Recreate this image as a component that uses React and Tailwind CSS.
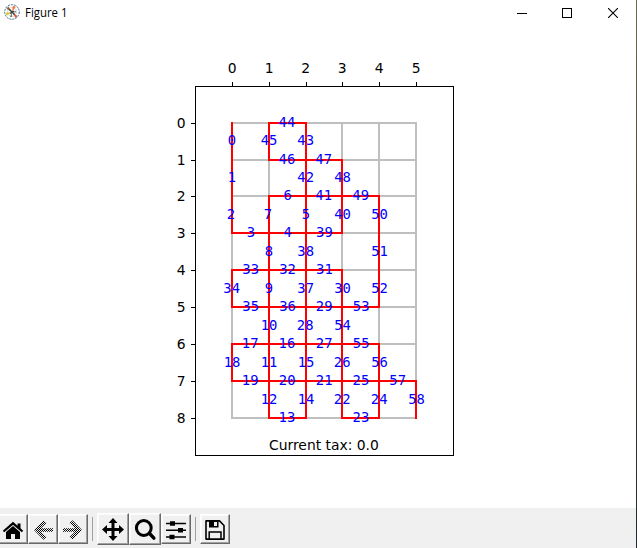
import React from "react";

const XS = [232, 269, 306, 342, 379, 416];
const YS = [123, 160, 196, 233, 270, 307, 344, 381, 418];

// [label, column, row, horizontal nudge]
const VERTICAL = [
  [0, 0, 0], [1, 0, 1], [2, 0, 2, -1], [45, 1, 0], [43, 2, 0, -0.3], [42, 2, 1, -0.3], [48, 3, 1, 0.6],
  [7, 1, 2, -1], [5, 2, 2], [40, 3, 2, 0.6], [50, 4, 2, 0.6], [8, 1, 3], [38, 2, 3, -0.3],
  [51, 4, 3, 0.6], [34, 0, 4, -0.3], [9, 1, 4], [37, 2, 4, -0.3], [30, 3, 4, 0.6], [52, 4, 4, 0.6],
  [10, 1, 5], [28, 2, 5, -0.8], [54, 3, 5, 0.6], [18, 0, 6], [11, 1, 6], [15, 2, 6],
  [26, 3, 6, 0.2], [56, 4, 6, 0.6], [12, 1, 7], [14, 2, 7], [22, 3, 7, 0.2],
  [24, 4, 7, 0.2], [58, 5, 7, 0.6],
];
const HORIZONTAL = [
  [44, 1, 0, -0.3], [46, 1, 1, -0.3], [47, 2, 1], [6, 1, 2, 0.6], [41, 2, 2], [49, 3, 2, 0.5],
  [3, 0, 3, 0.8], [4, 1, 3, 0.6], [39, 2, 3, 0.7], [33, 0, 4, 0.5], [32, 1, 4, 0.4],
  [31, 2, 4, 0.7], [35, 0, 5, 0.5], [36, 1, 5, 0.4], [29, 2, 5, 0.5], [53, 3, 5, 1],
  [17, 0, 6], [16, 1, 6, -0.3], [27, 2, 6, 0.5], [55, 3, 6, 1], [19, 0, 7], [20, 1, 7],
  [21, 2, 7, 0.5], [25, 3, 7, 0.7], [57, 4, 7, 0.5], [13, 1, 8, -0.3], [23, 3, 8, 0.7],
];

function Plot() {
  return (
    <svg
      width="636"
      height="483"
      viewBox="0 25 636 483"
      className="block font-['DejaVu_Sans',sans-serif] text-[13.89px]"
    >
      <g stroke="#bfbfbf" strokeWidth="2" strokeLinecap="square" shapeRendering="crispEdges">
        {XS.map((x) => <line key={x} x1={x} x2={x} y1="123" y2="418" />)}
        {YS.map((y) => <line key={y} x1="232" x2="416" y1={y} y2={y} />)}
      </g>
      <g stroke="#ff0000" strokeWidth="2" strokeLinecap="square" shapeRendering="crispEdges">
        {VERTICAL.map(([n, c, r]) => (
          <line key={n} x1={XS[c]} x2={XS[c]} y1={YS[r]} y2={YS[r + 1]} />
        ))}
        {HORIZONTAL.map(([n, c, r]) => (
          <line key={n} x1={XS[c]} x2={XS[c + 1]} y1={YS[r]} y2={YS[r]} />
        ))}
      </g>
      <g stroke="#000" fill="none" shapeRendering="crispEdges">
        <rect x="195.5" y="86.5" width="258" height="369" />
        {XS.map((x) => <line key={x} x1={x + 0.5} x2={x + 0.5} y1="82" y2="86" />)}
        {YS.map((y) => <line key={y} x1="191" x2="195" y1={y + 0.5} y2={y + 0.5} />)}
      </g>
      <g fill="#000">
        {XS.map((x, i) => <text key={x} x={x + (i === 2 ? -0.4 : 0.1)} y="73" textAnchor="middle">{i}</text>)}
        {YS.map((y, i) => <text key={y} x="185.5" y={y + 5} textAnchor="end">{i}</text>)}
        <text x="269" y="450">Current tax: 0.0</text>
      </g>
      <g fill="#0000ff" textAnchor="middle" className="font-['DejaVu_Sans_Mono',monospace]">
        {VERTICAL.map(([n, c, r, dx = 0]) => (
          <text key={n} x={XS[c] + dx} y={YS[r] + (r < 2 ? 22 : 23)}>{n}</text>
        ))}
        {HORIZONTAL.map(([n, c, r, dx = 0]) => (
          <text key={n} x={(XS[c] + XS[c + 1]) / 2 + dx - 0.3} y={YS[r] + 4}>{n}</text>
        ))}
      </g>
    </svg>
  );
}

function ToolButton({ large, label, children }) {
  const size = large ? "w-8 h-8" : "w-[30px] h-[30px]";
  return (
    <button
      aria-label={label}
      className={`${size} shrink-0 border border-t-white border-l-white border-r-[#696969] border-b-[#696969] bg-[#f0f0f0] shadow-[inset_-1px_-1px_0_#a0a0a0,inset_1px_1px_0_#fafafa]`}
    >
      <svg
        className="-ml-px -mt-px block overflow-visible"
        width={large ? 32 : 30}
        height={large ? 32 : 30}
      >
        {children}
      </svg>
    </button>
  );
}

function Separator() {
  return <div className="mx-1 h-6 w-px shrink-0 bg-[#a0a0a0]" />;
}

function Toolbar() {
  return (
    <div className="flex h-10 w-[636px] items-center overflow-hidden bg-[#f0f0f0] pt-0.5">
      <div className="-ml-0.5 flex items-center">
        <ToolButton label="Home">
          <path d="M8 18 15 12 22 18V25H17V20H13V25H8Z" />
          <path d="M5.5 17.5 15 9.3 24.5 17.5" fill="none" stroke="#000" strokeWidth="2.2" />
          <path d="M19.5 9.5h3v6l-3-2.5z" />
        </ToolButton>
        <ToolButton label="Back">
          <defs>
            <pattern id="dither" width="2" height="2" patternUnits="userSpaceOnUse">
              <path d="M0 0h1v1H0zM1 1h1v1H1z" shapeRendering="crispEdges" />
            </pattern>
          </defs>
          <path d="M6 16 15.5 6.2 18.5 9 13 14.2H25V17.8H13L18.5 23 15.5 25.8Z" fill="url(#dither)" />
        </ToolButton>
        <ToolButton label="Forward">
          <path d="M24 16 14.5 6.2 11.5 9 17 14.2H5V17.8H17L11.5 23 14.5 25.8Z" fill="url(#dither)" />
        </ToolButton>
      </div>
      <Separator />
      <ToolButton large label="Pan">
        <path d="M16 5 20.5 10H17.5V15H22V12L27 16.5 22 21V18H17.5V23H20.5L16 28 11.5 23H14.5V18H10V21L5 16.5 10 12V15H14.5V10H11.5Z" />
      </ToolButton>
      <ToolButton large label="Zoom">
        <circle cx="14.8" cy="15" r="7.4" fill="none" stroke="#000" strokeWidth="3" />
        <path d="m20.3 20.3 4.6 4.8" stroke="#000" strokeWidth="3.4" strokeLinecap="round" />
      </ToolButton>
      <ToolButton label="Configure subplots">
        <path d="M5 9.5h20M5 16.3h20M5 23h20" stroke="#000" strokeWidth="1.6" />
        <path d="M9 7.2h5v4.6H9zM17 14h5v4.6h-5zM8.5 20.7h5v4.6h-5z" />
      </ToolButton>
      <Separator />
      <ToolButton label="Save">
        <path d="M6 6.9H19.5L24 11.5V25.1H6Z" fill="none" stroke="#000" strokeWidth="1.6" strokeLinejoin="round" />
        <path d="M9 6.5H18.5V13.5H9ZM14 8V12H17V8Z" fillRule="evenodd" />
        <path d="M9.2 25V18H21V25" fill="none" stroke="#000" strokeWidth="1.5" />
      </ToolButton>
    </div>
  );
}

function TitleBar() {
  return (
    <div className="flex h-[25px] w-[636px] items-center bg-white">
      <svg className="-mt-px ml-1 block" width="16" height="16">
        <circle cx="8" cy="8" r="7.3" fill="#fff" stroke="#426b86" strokeWidth="1" strokeDasharray="2 1" />
        <circle cx="8" cy="8" r="4.5" fill="none" stroke="#bdc7ce" strokeWidth=".7" />
        <path d="m8 8 .8-6.2 3 1z" fill="#ef7940" />
        <path d="m8 8 5.4 4-1.8 2z" fill="#df5830" />
        <path d="M8 8 1.7 8.8l.8 3z" fill="#dcc53e" />
        <path d="M8 8 4.4 2.6 2.4 4.7z" fill="#8b6744" />
        <path d="m8 8-2 5h2zM8 8l4-1v1.5z" fill="#6a7c62" />
        <path d="m5.5 5.5 5 5M6 9.5l4-2.5" stroke="#343b42" strokeWidth="1.4" />
      </svg>
      <span className="ml-[5px] mt-px origin-left scale-x-[0.95] whitespace-nowrap font-['Open_Sans',sans-serif] text-[12px] leading-4 text-black">
        Figure 1
      </span>
      <div className="ml-auto mr-[18px] flex items-center">
        <svg className="mr-[35px] block" width="10" height="10" shapeRendering="crispEdges"><path d="M0 5.5h10" stroke="#000" /></svg>
        <svg className="mr-9 block" width="10" height="10" shapeRendering="crispEdges"><rect x=".5" y=".5" width="9" height="9" fill="none" stroke="#000" /></svg>
        <svg className="block" width="10" height="10"><path d="m0 0 10 10M10 0 0 10" stroke="#000" strokeWidth="1.1" /></svg>
      </div>
    </div>
  );
}

export default function App() {
  return (
    <div className="flex h-[548px] w-[637px] overflow-hidden bg-white">
      <div className="flex w-[636px] flex-col">
        <TitleBar />
        <Plot />
        <Toolbar />
      </div>
      <div className="w-px bg-gradient-to-b from-[#6b6d58] via-[#40372f] to-[#252a2c]" />
    </div>
  );
}
